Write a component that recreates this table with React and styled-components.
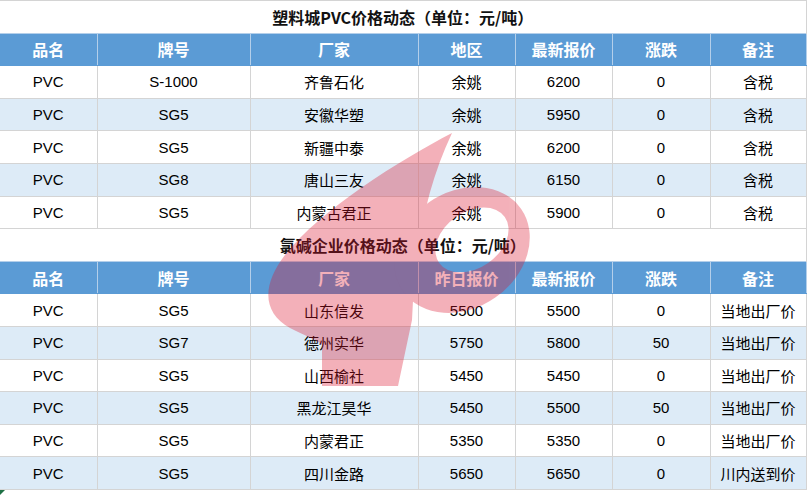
import React from 'react'
import styled, { createGlobalStyle } from 'styled-components'

const GlobalStyle = createGlobalStyle`
    html, body {
        margin: 0;
        padding: 0;
        background: #fff;
    }
`

const COLS = [97, 153, 168, 97, 97, 98, 96]

const PVC_HEAD = ['品名', '牌号', '厂家', '地区', '最新报价', '涨跌', '备注']
const PVC_ROWS = [
    ['PVC', 'S-1000', '齐鲁石化', '余姚', '6200', '0', '含税'],
    ['PVC', 'SG5', '安徽华塑', '余姚', '5950', '0', '含税'],
    ['PVC', 'SG5', '新疆中泰', '余姚', '6200', '0', '含税'],
    ['PVC', 'SG8', '唐山三友', '余姚', '6150', '0', '含税'],
    ['PVC', 'SG5', '内蒙古君正', '余姚', '5900', '0', '含税']
]

const CA_HEAD = ['品名', '牌号', '厂家', '昨日报价', '最新报价', '涨跌', '备注']
const CA_ROWS = [
    ['PVC', 'SG5', '山东信发', '5500', '5500', '0', '当地出厂价'],
    ['PVC', 'SG7', '德州实华', '5750', '5800', '50', '当地出厂价'],
    ['PVC', 'SG5', '山西榆社', '5450', '5450', '0', '当地出厂价'],
    ['PVC', 'SG5', '黑龙江昊华', '5450', '5500', '50', '当地出厂价'],
    ['PVC', 'SG5', '内蒙君正', '5350', '5350', '0', '当地出厂价'],
    ['PVC', 'SG5', '四川金路', '5650', '5650', '0', '川内送到价']
]

const Page = styled.div`
    position: relative;
    width: 808px;
    height: 496px;
    overflow: hidden;
    background: #fff;
    font-family: 'Liberation Sans', 'Noto Sans CJK SC', sans-serif;
`

const Sheet = styled.table`
    width: 806px;
    table-layout: fixed;
    border-collapse: collapse;
    font-size: 15px;
    color: #000;
`

const Col = styled.col`
    width: ${ p => p.$w }px;
`

const Row = styled.tr`
    height: 32.6px;
    background: ${ p => (p.$alt ? '#ddebf7' : '#fff') };
`

const Title = styled.td`
    padding: 0;
    text-align: center;
    font-family: 'Noto Sans CJK SC', sans-serif;
    font-size: 16px;
    font-weight: 700;
    color: #111;
    border-top: 1px solid #d4d4d4;
    border-right: 1px solid #d4d4d4;
`

const Head = styled.th`
    padding: 0;
    background: #5b9bd5;
    color: #fff;
    font-family: 'Noto Sans CJK SC', sans-serif;
    font-size: 16px;
    font-weight: 700;
    border: 1px solid #b4cfea;
    border-bottom-color: #5b9bd5;

    &:first-child {
        border-left: 0;
    }
`

const Cell = styled.td`
    padding: 0;
    text-align: center;
    white-space: nowrap;
    border: 1px solid #d4d4d4;

    &:first-child {
        border-left: 0;
    }
`

const Tail = styled.div`
    height: 7px;

    &::before {
        content: '';
        display: block;
        width: 0;
        height: 0;
        border-top: 5px solid #1e7145;
        border-right: 5px solid transparent;
    }
`

const Watermark = styled.svg`
    position: absolute;
    top: 0;
    left: 0;
    pointer-events: none;
`

const Logo = () => (
    <Watermark width='808' height='496' viewBox='0 0 808 496'>
        <g opacity='0.33' fill='#dc142d'>
            <path d='M452,133 C400,160 320,210 285,255 C262,285 262,312 290,328 C305,336 318,340 322,345 L322,386 L398,386 L412,320 C415,250 425,190 452,133 Z' />
            <path
                fillRule='evenodd'
                d='M521,208.7 A72,58 -35 1 0 403,291.3 A72,58 -35 1 0 521,208.7 Z M504.8,217 A40,28 -35 1 0 439.2,263 A40,28 -35 1 0 504.8,217 Z'
            />
        </g>
    </Watermark>
)

const Block = ({ title, head, rows }) => (
    <>
        <Row>
            <Title colSpan={ 7 }>{ title }</Title>
        </Row>
        <Row>
            { head.map((h, i) => <Head key={ i }>{ h }</Head>) }
        </Row>
        { rows.map((r, i) => (
            <Row key={ i } $alt={ i % 2 === 1 }>
                { r.map((c, j) => <Cell key={ j }>{ c }</Cell>) }
            </Row>
        )) }
    </>
)

const App = () => (
    <Page>
        <GlobalStyle />
        <Sheet>
            <colgroup>
                { COLS.map((w, i) => <Col key={ i } $w={ w } />) }
            </colgroup>
            <tbody>
                <Block title='塑料城PVC价格动态（单位：元/吨）' head={ PVC_HEAD } rows={ PVC_ROWS } />
                <Block title='氯碱企业价格动态（单位：元/吨）' head={ CA_HEAD } rows={ CA_ROWS } />
            </tbody>
        </Sheet>
        <Tail />
        <Logo />
    </Page>
)

export default App
